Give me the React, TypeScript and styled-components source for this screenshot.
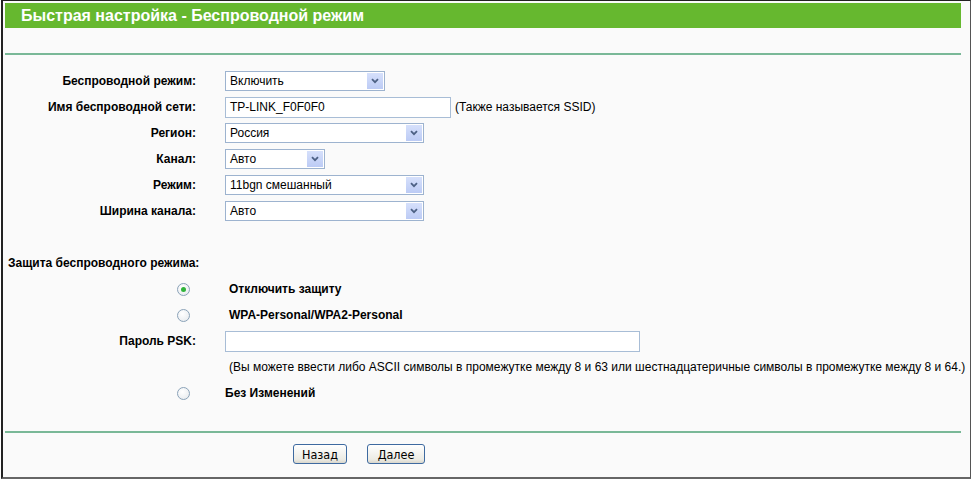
import React from "react";
import styled, { createGlobalStyle } from "styled-components";

const GlobalStyle = createGlobalStyle`
    html, body {
        margin: 0;
        padding: 0;
        background: #ffffff;
    }
    body {
        font-family: "Liberation Sans", Arial, sans-serif;
        font-size: 12px;
        color: #000;
    }
`;

const Frame = styled.div`
    width: 970px;
    height: 479px;
    margin-left: 1px;
    border-top: 1px solid #222;
    border-left: 2px solid #222;
    border-right: 1px solid #555;
    border-bottom: 2px solid #666;
    background: #fafafa;
    padding: 2px 9px 0 2px;
    box-sizing: border-box;
    display: flex;
    flex-direction: column;
`;

const Header = styled.div`
    height: 25px;
    background: #66b82f;
    color: #fff;
    font-weight: bold;
    font-size: 16px;
    line-height: 25px;
    padding-left: 16px;
`;

const Divider = styled.div<{ $top: number }>`
    height: 2px;
    background: #79b897;
    margin-top: ${(p) => p.$top}px;
`;

const Form = styled.div`
    display: grid;
    grid-template-columns: 191px 1fr;
    column-gap: 29px;
    grid-auto-rows: 26px;
    align-items: center;
    margin-top: 13px;
`;

const Label = styled.div`
    text-align: right;
    font-weight: bold;
    font-size: 12px;
`;

const SectionTitle = styled.div`
    grid-column: 1 / span 2;
    padding-left: 3px;
    font-weight: bold;
    font-size: 12px;
`;

const Cell = styled.div`
    display: flex;
    align-items: center;
    gap: 4px;
`;

const RadioCell = styled.div`
    display: flex;
    justify-content: flex-end;
    padding-right: 6px;
`;

const Radio = styled.span<{ $checked?: boolean }>`
    width: 11px;
    height: 11px;
    border-radius: 50%;
    border: 1px solid #8aa2b8;
    background: radial-gradient(circle at 40% 35%, #ffffff, #e4e8ec);
    display: flex;
    align-items: center;
    justify-content: center;

    &::after {
        content: "";
        width: 5px;
        height: 5px;
        border-radius: 50%;
        background: ${(p) => (p.$checked ? "#2fb33a" : "transparent")};
    }
`;

const OptionText = styled.span<{ $indent: number }>`
    font-weight: bold;
    font-size: 12px;
    padding-left: ${(p) => p.$indent}px;
`;

const Note = styled.span`
    padding-left: 4px;
    white-space: nowrap;
`;

const SelectBox = styled.div<{ $width: number }>`
    width: ${(p) => p.$width}px;
    height: 20px;
    box-sizing: border-box;
    border: 1px solid #9db3cf;
    background: #fff;
    display: flex;
    align-items: center;
    justify-content: space-between;
    padding-left: 4px;
`;

const ArrowButton = styled.span`
    width: 16px;
    height: 16px;
    margin-right: 1px;
    background: linear-gradient(#d6e0fb, #bccbf5);
    display: flex;
    align-items: center;
    justify-content: center;
`;

const TextInput = styled.div<{ $width: number }>`
    width: ${(p) => p.$width}px;
    height: 21px;
    box-sizing: border-box;
    border: 1px solid #a8bdd6;
    background: #fff;
    padding-left: 4px;
    line-height: 19px;
`;

const ButtonRow = styled.div`
    display: flex;
    gap: 20px;
    padding-left: 288px;
    margin-top: 11px;
`;

const Button = styled.button<{ $width: number }>`
    width: ${(p) => p.$width}px;
    height: 20px;
    padding: 0;
    border: 1px solid #3e6aa0;
    border-radius: 3px;
    background: linear-gradient(#ffffff, #ecebe4 80%, #d9d7cc);
    font-family: "DejaVu Sans Condensed", "Liberation Sans", sans-serif;
    font-size: 12.5px;
    color: #000;
`;

function Select({ value, width }: { value: string; width: number }) {
    return (
        <SelectBox $width={width}>
            <span>{value}</span>
            <ArrowButton>
                <svg width="8" height="6" viewBox="0 0 8 6">
                    <path d="M1 1.2 L4 4.2 L7 1.2" fill="none" stroke="#4d6185" strokeWidth="1.8" />
                </svg>
            </ArrowButton>
        </SelectBox>
    );
}

export default function App() {
    return (
        <>
            <GlobalStyle />
            <Frame>
                <Header>Быстрая настройка - Беспроводной режим</Header>
                <Divider $top={25} />
                <Form>
                    <Label>Беспроводной режим:</Label>
                    <Cell>
                        <Select value="Включить" width={160} />
                    </Cell>

                    <Label>Имя беспроводной сети:</Label>
                    <Cell>
                        <TextInput $width={226}>TP-LINK_F0F0F0</TextInput>
                        <span>(Также называется SSID)</span>
                    </Cell>

                    <Label>Регион:</Label>
                    <Cell>
                        <Select value="Россия" width={199} />
                    </Cell>

                    <Label>Канал:</Label>
                    <Cell>
                        <Select value="Авто" width={100} />
                    </Cell>

                    <Label>Режим:</Label>
                    <Cell>
                        <Select value="11bgn смешанный" width={199} />
                    </Cell>

                    <Label>Ширина канала:</Label>
                    <Cell>
                        <Select value="Авто" width={199} />
                    </Cell>

                    <SectionTitle />

                    <SectionTitle>Защита беспроводного режима:</SectionTitle>

                    <RadioCell>
                        <Radio $checked />
                    </RadioCell>
                    <Cell>
                        <OptionText $indent={4}>Отключить защиту</OptionText>
                    </Cell>

                    <RadioCell>
                        <Radio />
                    </RadioCell>
                    <Cell>
                        <OptionText $indent={4}>WPA-Personal/WPA2-Personal</OptionText>
                    </Cell>

                    <Label>Пароль PSK:</Label>
                    <Cell>
                        <TextInput $width={415} />
                    </Cell>

                    <div />
                    <Cell>
                        <Note>
                            (Вы можете ввести либо ASCII символы в промежутке между 8 и 63 или шестнадцатеричные символы в промежутке между 8 и 64.)
                        </Note>
                    </Cell>

                    <RadioCell>
                        <Radio />
                    </RadioCell>
                    <Cell>
                        <OptionText $indent={0}>Без Изменений</OptionText>
                    </Cell>
                </Form>
                <Divider $top={25} />
                <ButtonRow>
                    <Button $width={54}>Назад</Button>
                    <Button $width={58}>Далее</Button>
                </ButtonRow>
            </Frame>
        </>
    );
}
